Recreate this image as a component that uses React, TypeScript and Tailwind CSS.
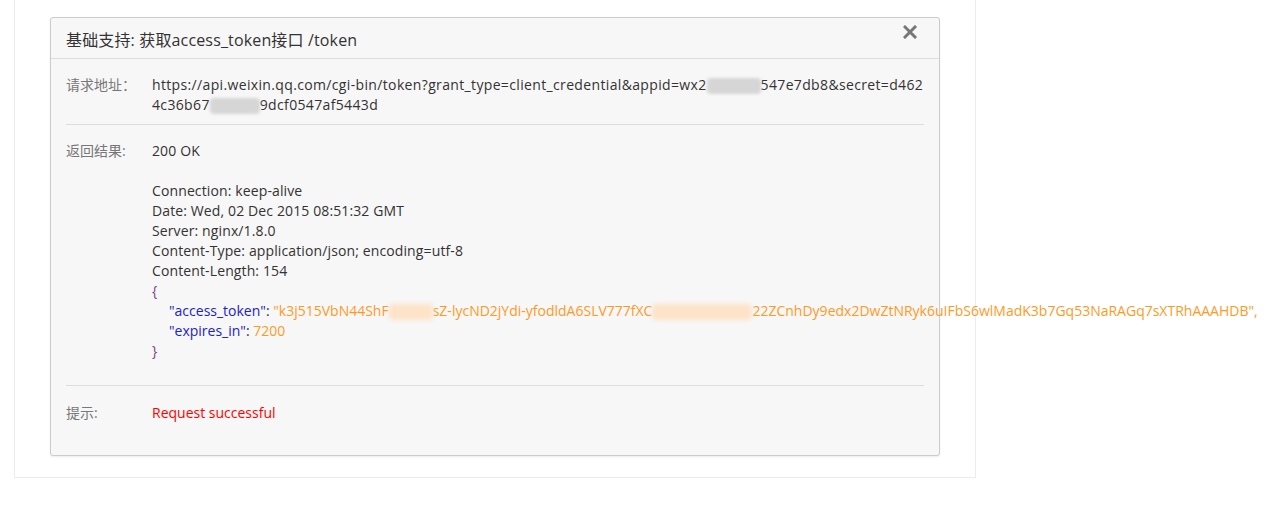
const FONT = "font-['Open_Sans','Noto_Sans_CJK_SC',sans-serif]";

function Mask({ w, tone = "gray" }: { w: number; tone?: "gray" | "peach" }) {
  const cls =
    tone === "gray"
      ? "inline-block h-[16px] align-middle bg-[#d6d6d6] blur-[1.5px] rounded-sm"
      : "inline-block h-[16px] align-middle bg-[#fde3c8] blur-[2px] rounded-sm";
  return <span className={cls} style={{ width: w }} />;
}

function Row({
  label,
  children,
  className = "",
}: {
  label: string;
  children: React.ReactNode;
  className?: string;
}) {
  return (
    <div className={`flex ${className}`}>
      <div className="w-[86px] shrink-0 text-[#777]">{label}</div>
      <div className="min-w-0 flex-1 text-[#333]">{children}</div>
    </div>
  );
}

export default function App() {
  return (
    <div className={`h-[508px] bg-white ${FONT} text-[14px] leading-[20px]`}>
      <div className="ml-[14px] w-[962px] h-[478px] border-l border-r border-b border-[#ececec] pl-[35px] pt-[17px]">
        <div className="w-[890px] rounded-[3px] border border-[#cccccc] bg-[#f7f7f7] shadow-[0_1px_2px_rgba(0,0,0,0.08)]">
          <div className="flex h-[41px] items-center justify-between border-b border-[#dddddd] pl-[15px] pr-[22px]">
            <h3 className="mt-[3px] text-[16px] tracking-[0.15px] text-[#333]">基础支持: 获取access_token接口 /token</h3>
            <svg width="14" height="14" viewBox="0 0 14 14" className="-mt-[13px]">
              <path d="M2 2 L12 12 M12 2 L2 12" stroke="#777" strokeWidth="3" strokeLinecap="square" />
            </svg>
          </div>
          <div className="px-[15px] pb-[32px]">
            <Row label="请求地址：" className="pt-[16px] pb-[9px] border-b border-[#dddddd]">
              <div className="whitespace-nowrap tracking-[0.35px]">
                https://api.weixin.qq.com/cgi-bin/token?grant_type=client_credential&amp;appid=wx2
                <Mask w={54} />
                547e7db8&amp;secret=d462
              </div>
              <div className="whitespace-nowrap tracking-[0.35px]">
                4c36b67
                <Mask w={50} />
                9dcf0547af5443d
              </div>
            </Row>
            <Row label="返回结果:" className="pt-[16px] pb-[24px] border-b border-[#dddddd]">
              <div className="tracking-[0.12px]">
                <div>200 OK</div>
                <div className="h-[20px]" />
                <div>Connection: keep-alive</div>
                <div>Date: Wed, 02 Dec 2015 08:51:32 GMT</div>
                <div>Server: nginx/1.8.0</div>
                <div>Content-Type: application/json; encoding=utf-8</div>
                <div>Content-Length: 154</div>
              </div>
              <div className="text-[#7b3f8f]">{"{"}</div>
              <div className="whitespace-nowrap pl-[17px]">
                <span className="text-[#2222cc]">"access_token"</span>
                <span className="text-[#333]">: </span>
                <span className="text-[#ff9a1f]">
                  "k3j515VbN44ShF
                  <Mask w={44} tone="peach" />
                  sZ-lycND2jYdi-yfodldA6SLV777fXC
                  <Mask w={100} tone="peach" />
                  22ZCnhDy9edx2DwZtNRyk6uIFbS6wlMadK3b7Gq53NaRAGq7sXTRhAAAHDB",
                </span>
              </div>
              <div className="whitespace-nowrap pl-[17px]">
                <span className="text-[#2222cc]">"expires_in"</span>
                <span className="text-[#333]">: </span>
                <span className="text-[#ff9a1f]">7200</span>
              </div>
              <div className="text-[#7b3f8f]">{"}"}</div>
            </Row>
            <Row label="提示:" className="pt-[17px]">
              <span className="text-[#ff0000]">Request successful</span>
            </Row>
          </div>
        </div>
      </div>
    </div>
  );
}
